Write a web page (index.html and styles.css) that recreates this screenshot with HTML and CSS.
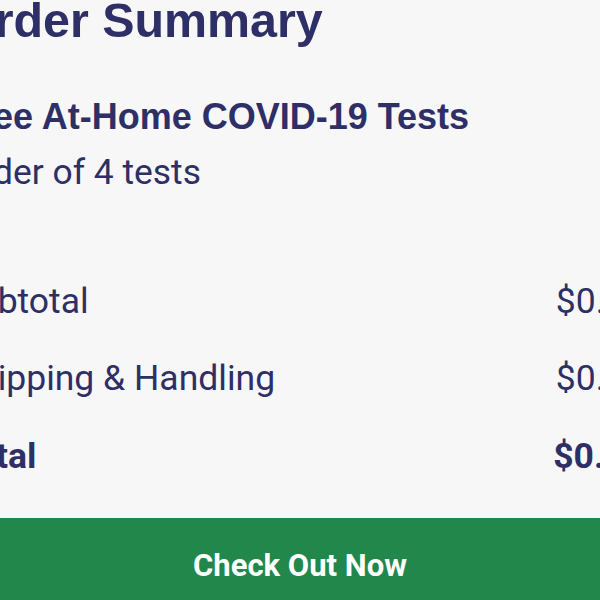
FILE: index.html
```html
<!doctype html>
<html>
    <head>
        <title>Order Summary</title>
        <link rel="stylesheet" href="styles.css">
    </head>
    <body>
        <main class="summary">
            <h1>Order Summary</h1>
            <h2>Free At-Home COVID-19 Tests</h2>
            <p class="note">Order of 4 tests</p>

            <div class="rows">
                <div class="row">
                    <span>Subtotal</span>
                    <span>$0.00</span>
                </div>
                <div class="row">
                    <span>Shipping &amp; Handling</span>
                    <span>$0.00</span>
                </div>
                <div class="row total">
                    <span>Total</span>
                    <span>$0.00</span>
                </div>
            </div>
        </main>
        <button class="checkout">Check Out Now</button>
    </body>
</html>
```

FILE: styles.css
```css
html, body {
    margin: 0;
    height: 100%;
    overflow: hidden;
}

body {
    background: #f7f7f7;
    color: #2d2f66;
    font-family: Roboto, "Liberation Sans", sans-serif;
}

.summary {
    margin: 0 -45px 0 -43px;
}

h1 {
    font-family: "Liberation Sans", Arial, sans-serif;
    font-size: 48.4px;
    line-height: 49px;
    font-weight: bold;
    margin: -4.5px 0 0;
}

h2 {
    font-family: "Liberation Sans", Arial, sans-serif;
    font-size: 36px;
    line-height: 36px;
    font-weight: bold;
    margin: 54.5px 0 0;
}

.note {
    font-size: 35.4px;
    line-height: 36px;
    margin: 19px 0 0;
}

.rows {
    display: flex;
    flex-direction: column;
    gap: 41.5px;
    margin-top: 92.5px;
}

.row {
    display: flex;
    justify-content: space-between;
    font-size: 35.5px;
    line-height: 36px;
}

.total {
    font-weight: bold;
}

.checkout {
    display: block;
    width: 100%;
    margin-top: 44.5px;
    padding: 32px 0;
    border: none;
    background: #21874b;
    color: white;
    font-family: Roboto, sans-serif;
    font-size: 31px;
    line-height: 31px;
    font-weight: bold;
}
```
